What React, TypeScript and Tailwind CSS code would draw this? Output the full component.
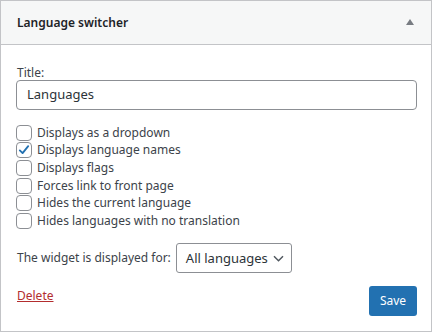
import React from "react";

const options = [
  { label: "Displays as a dropdown", checked: false },
  { label: "Displays language names", checked: true },
  { label: "Displays flags", checked: false },
  { label: "Forces link to front page", checked: false },
  { label: "Hides the current language", checked: false },
  { label: "Hides languages with no translation", checked: false },
];

const Checkbox = ({ checked }: { checked: boolean }) => (
  <span className="w-4 h-4 shrink-0 rounded-[4px] border border-[#8c8f94] bg-white flex items-center justify-center">
    {checked && (
      <svg width="14" height="14" viewBox="0 0 20 20">
        <path d="M4 10.5l4 4 8-10" fill="none" stroke="#2271b1" strokeWidth="2.6" strokeLinecap="round" strokeLinejoin="round" />
      </svg>
    )}
  </span>
);

export default function App() {
  return (
    <div className="w-[432px] h-[332px] bg-white border border-[#c3c4c7] text-[#3c434a] font-['Noto_Sans',sans-serif] text-[12px] flex flex-col">
      {/* Header */}
      <div className="h-[44px] shrink-0 bg-[#f6f7f7] border-b border-[#c3c4c7] flex items-center justify-between pl-4 pr-[17px]">
        <span className="text-[12px] font-semibold text-[#1d2327]">Language switcher</span>
        <svg width="8" height="6" viewBox="0 0 8 6" className="mt-[-2px]">
          <path d="M0 6L4 0L8 6Z" fill="#787c82" />
        </svg>
      </div>

      {/* Body */}
      <div className="flex-1 px-[15px] pt-[19px] flex flex-col">
        <label className="leading-[18px] pl-[1px]">Title:</label>
        <div className="mt-[-2px] h-[30px] w-[401px] border border-[#8c8f94] rounded-[4px] px-[10px] flex items-center text-[13px] text-[#2c3338]">
          Languages
        </div>

        <div className="mt-[14.5px] flex flex-col gap-[1.7px]">
          {options.map((o) => (
            <div key={o.label} className="flex items-center gap-[5px] h-4">
              <Checkbox checked={o.checked} />
              <span className="leading-4">{o.label}</span>
            </div>
          ))}
        </div>

        <div className="mt-[14.5px] flex items-center gap-[5px] pl-[1px]">
          <span className="whitespace-nowrap">The widget is displayed for:</span>
          <div className="h-[30px] w-[116px] shrink-0 border border-[#8c8f94] rounded-[3px] pl-[9px] pr-[7px] flex items-center justify-between text-[13px] text-[#2c3338] whitespace-nowrap">
            <span>All languages</span>
            <svg width="11" height="7" viewBox="0 0 11 7">
              <path d="M1 1.2L5.5 5.7L10 1.2" fill="none" stroke="#50575e" strokeWidth="1.5" />
            </svg>
          </div>
        </div>

        <div className="mt-[12.5px] flex items-start justify-between pl-[1px]">
          <a className="text-[#b32d2e] underline leading-[18px] mt-[1.5px]">Delete</a>
          <button className="h-[30px] w-[48px] bg-[#2271b1] text-white rounded-[3px] text-[12px] mr-[-1px]">
            Save
          </button>
        </div>
      </div>
    </div>
  );
}
